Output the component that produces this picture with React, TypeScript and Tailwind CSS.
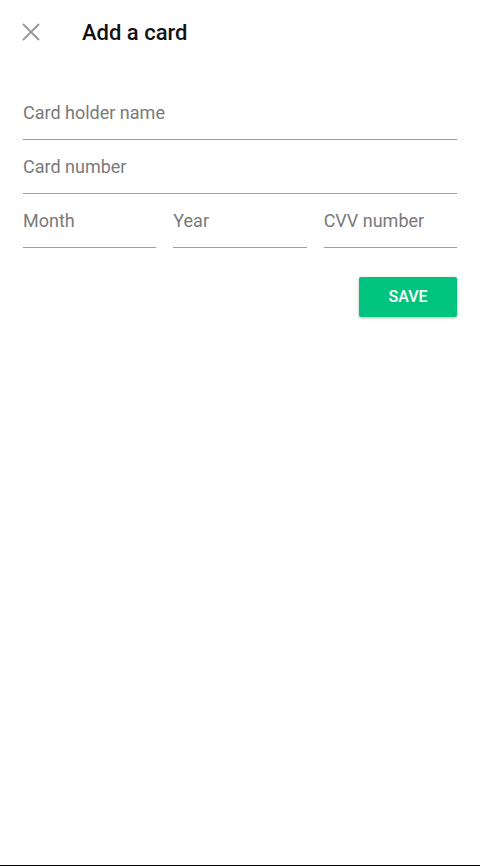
import React from "react";

function Field({ label, className = "" }: { label: string; className?: string }) {
  return (
    <div className={`h-[54px] border-b border-[#9e9e9e] pt-[17px] ${className}`}>
      <span className="block text-[18px] leading-[20px] text-[#7a7a7a]">{label}</span>
    </div>
  );
}

export default function App() {
  return (
    <div
      className="flex min-h-[866px] flex-col bg-white"
      style={{ fontFamily: "Roboto, 'Liberation Sans', sans-serif" }}
    >
      {/* Header */}
      <div className="flex h-16 items-center">
        <button className="ml-[19px] flex h-6 w-6 items-center justify-center">
          <svg width="24" height="24" viewBox="0 0 24 24" fill="none">
            <path d="M4 4 L20 20 M20 4 L4 20" stroke="#9a9a9a" strokeWidth="2" />
          </svg>
        </button>
        <h1 className="ml-[39px] text-[22px] font-medium text-[#111]">Add a card</h1>
      </div>

      {/* Form */}
      <div className="flex flex-col px-[23px] pt-[22px]">
        <Field label="Card holder name" />
        <Field label="Card number" />
        <div className="grid grid-cols-3 gap-[17px]">
          <Field label="Month" />
          <Field label="Year" />
          <Field label="CVV number" />
        </div>
        <div className="mt-[29px] flex justify-end">
          <button className="h-10 w-[98px] rounded-[2px] bg-[#00c37f] text-[16px] font-medium text-white shadow-[0_1px_3px_rgba(0,0,0,0.3)]">
            SAVE
          </button>
        </div>
      </div>

      <div className="flex-1" />
      <div className="h-px bg-black" />
    </div>
  );
}
